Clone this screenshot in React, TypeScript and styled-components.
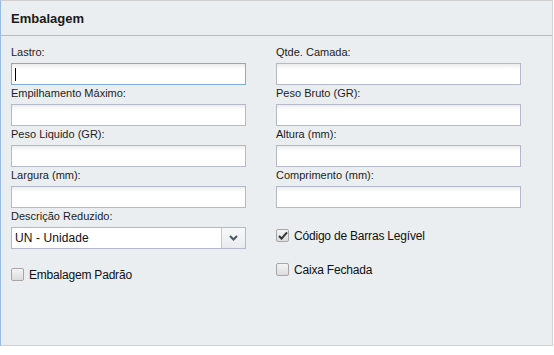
import * as React from "react";
import styled, { createGlobalStyle } from "styled-components";

const GlobalStyle = createGlobalStyle`
  html, body {
    margin: 0;
    padding: 0;
    background: #fff;
  }
  body {
    font-family: "Liberation Sans", Arial, sans-serif;
    color: #222;
  }
`;

const Panel = styled.div`
  box-sizing: border-box;
  width: 553px;
  height: 346px;
  background: #ebeef0;
  border: 1px solid #d0d0d0;
  border-left-color: #99bbe8;
  display: flex;
  flex-direction: column;
`;

const Header = styled.div`
  height: 34px;
  border-bottom: 1px solid #a8bfd8;
  display: flex;
  align-items: center;
  padding-left: 10px;
  font-size: 13px;
  font-weight: bold;
  color: #1a1a1a;
`;

const Body = styled.div`
  display: grid;
  grid-template-columns: 235px 245px;
  column-gap: 30px;
  padding: 8px 0 0 10px;
`;

const Column = styled.div`
  display: flex;
  flex-direction: column;
`;

const Field = styled.div`
  display: flex;
  flex-direction: column;
  height: 41px;
`;

const Label = styled.label`
  height: 19px;
  line-height: 17px;
  font-size: 11px;
  color: #1c1c1c;
  white-space: nowrap;
`;

const InputBox = styled.div<{ $focused?: boolean }>`
  position: relative;
  box-sizing: border-box;
  height: 22px;
  border: 1px solid ${(p) => (p.$focused ? "#7eadd9" : "#b5b8c8")};
  background: linear-gradient(to bottom, #ececec 0, #fff 5px);
`;

const Caret = styled.span`
  position: absolute;
  left: 3px;
  top: 4px;
  width: 1px;
  height: 13px;
  background: #000;
`;

const Select = styled.div`
  box-sizing: border-box;
  height: 22px;
  display: flex;
  border: 1px solid #b5b8c8;
  background: #fff;
`;

const SelectText = styled.div`
  flex: 1;
  padding-left: 3px;
  font-size: 12px;
  letter-spacing: 0.1px;
  line-height: 20px;
  color: #111;
`;

const Trigger = styled.div`
  width: 23px;
  border-left: 1px solid #c3c6d0;
  background: linear-gradient(to bottom, #f7f8f9, #e9ecef);
  display: flex;
  align-items: center;
  justify-content: center;
`;

const CheckRow = styled.div<{ $top: number }>`
  display: flex;
  align-items: center;
  gap: 5px;
  margin-top: ${(p) => p.$top}px;
  height: 15px;
  font-size: 12px;
  letter-spacing: -0.2px;
  color: #111;
  white-space: nowrap;
`;

const Box = styled.span`
  box-sizing: border-box;
  width: 13px;
  height: 13px;
  border: 1px solid #a6a6a6;
  border-radius: 2px;
  background: linear-gradient(to bottom, #f4f4f4, #dcdcdc);
  display: flex;
  align-items: center;
  justify-content: center;
`;

const Check = ({ on }: { on?: boolean }) => (
  <Box>
    {on && (
      <svg width="10" height="9" viewBox="0 0 10 9">
        <path d="M1 5 L3.6 7.6 L9 1.4" stroke="#333" strokeWidth="2" fill="none" />
      </svg>
    )}
  </Box>
);

const leftFields = ["Lastro:", "Empilhamento Máximo:", "Peso Liquido (GR):", "Largura (mm):"];
const rightFields = ["Qtde. Camada:", "Peso Bruto (GR):", "Altura (mm):", "Comprimento (mm):"];

export default function App() {
  return (
    <>
      <GlobalStyle />
      <Panel>
        <Header>Embalagem</Header>
        <Body>
          <Column>
            {leftFields.map((f, i) => (
              <Field key={f}>
                <Label>{f}</Label>
                <InputBox $focused={i === 0}>{i === 0 && <Caret />}</InputBox>
              </Field>
            ))}
            <Field>
              <Label>Descrição Reduzido:</Label>
              <Select>
                <SelectText>UN - Unidade</SelectText>
                <Trigger>
                  <svg width="9" height="6" viewBox="0 0 9 6">
                    <path d="M1 1 L4.5 4.5 L8 1" stroke="#4b5866" strokeWidth="2" fill="none" />
                  </svg>
                </Trigger>
              </Select>
            </Field>
            <CheckRow $top={18}>
              <Check />
              Embalagem Padrão
            </CheckRow>
          </Column>
          <Column>
            {rightFields.map((f) => (
              <Field key={f}>
                <Label>{f}</Label>
                <InputBox />
              </Field>
            ))}
            <CheckRow $top={20}>
              <Check on />
              Código de Barras Legível
            </CheckRow>
            <CheckRow $top={19}>
              <Check />
              Caixa Fechada
            </CheckRow>
          </Column>
        </Body>
      </Panel>
    </>
  );
}
